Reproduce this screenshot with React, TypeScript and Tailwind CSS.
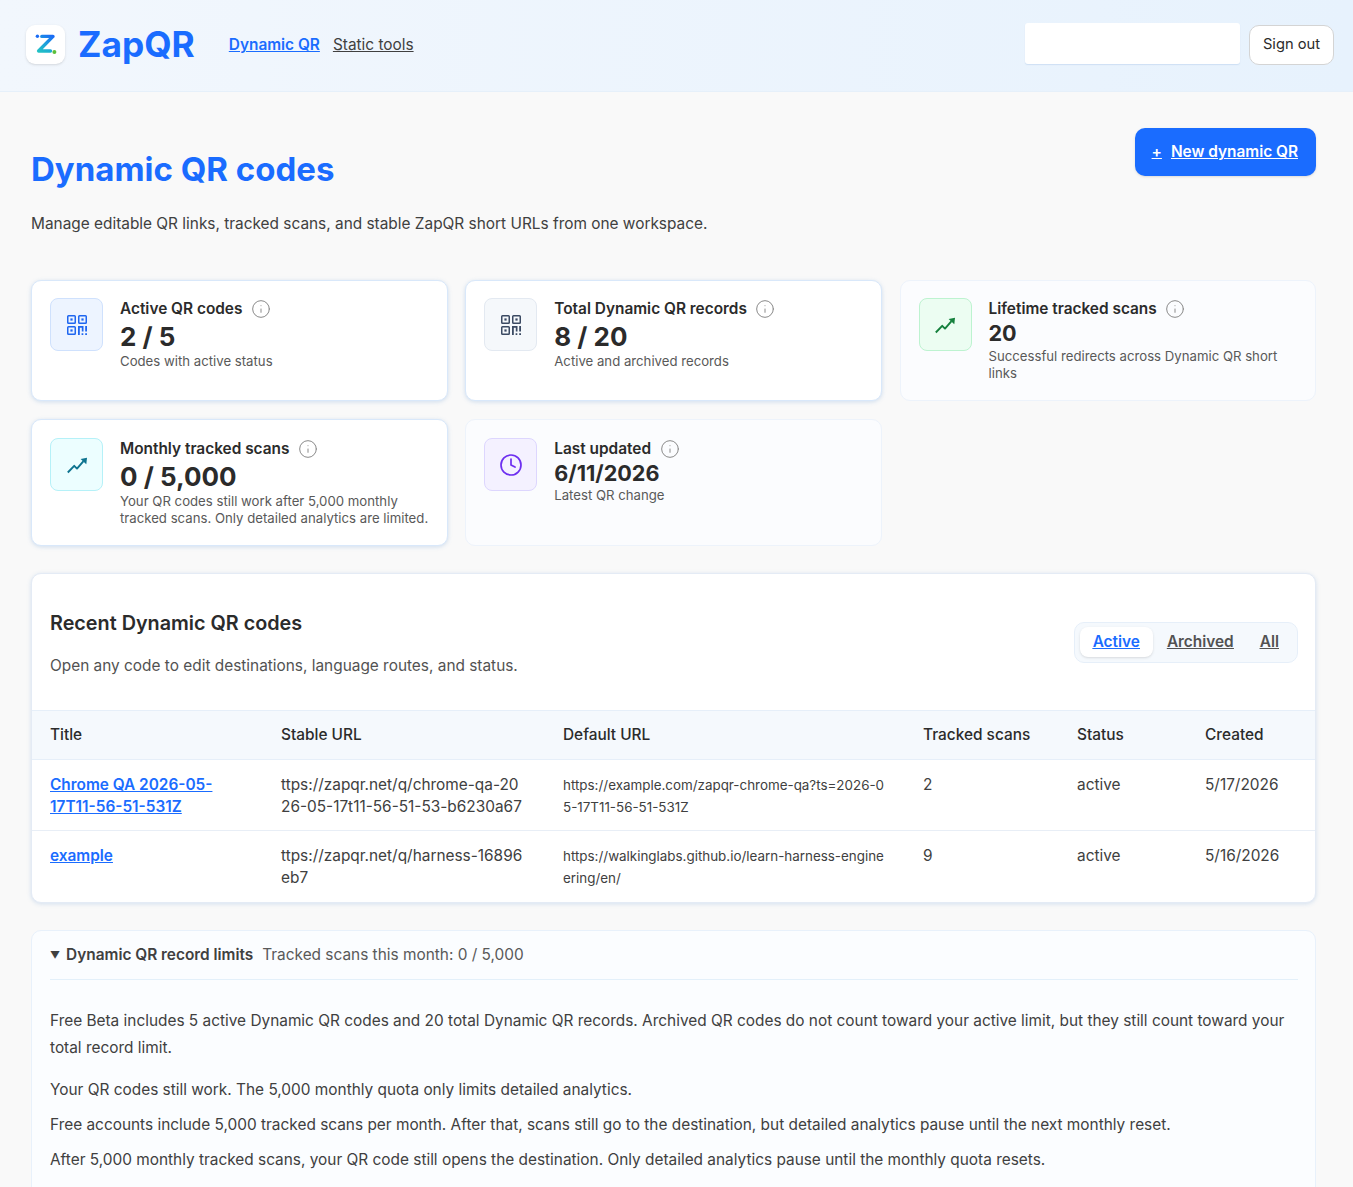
import React from 'react';
import { Info, Clock } from 'lucide-react';

const Logo = () => (
  <svg width="24" height="24" viewBox="0 0 24 24" fill="none">
    <defs>
      <linearGradient id="zg" gradientUnits="userSpaceOnUse" x1="6" y1="20" x2="16" y2="2">
        <stop offset="0" stopColor="#22c3c3" />
        <stop offset="0.55" stopColor="#1d9fdc" />
        <stop offset="1" stopColor="#1a6cf5" />
      </linearGradient>
    </defs>
    <circle cx="3.4" cy="3.2" r="1.7" fill="#1a6cf5" />
    <path d="M7.8 3.4H19L4.6 18H16.5" stroke="url(#zg)" strokeWidth="3.4" strokeLinecap="round" strokeLinejoin="round" />
    <circle cx="20.4" cy="19" r="2" fill="#5bbf3a" />
  </svg>
);

const QrIcon = ({ className }: { className?: string }) => (
  <svg className={className} viewBox="0 0 20 20" fill="none" stroke="currentColor" strokeWidth="1.5">
    <rect x="0.75" y="0.75" width="7.5" height="7.5" rx="0.8" />
    <rect x="11.75" y="0.75" width="7.5" height="7.5" rx="0.8" />
    <rect x="0.75" y="11.75" width="7.5" height="7.5" rx="0.8" />
    <g fill="currentColor" stroke="none">
      <rect x="3.4" y="3.4" width="2.2" height="2.2" />
      <rect x="14.4" y="3.4" width="2.2" height="2.2" />
      <rect x="3.4" y="14.4" width="2.2" height="2.2" />
      <path d="M11 11h5.5v5.5h-1.7v-3.8H12.8V20H11zM18.2 11H20v5.5h-1.8zM14.6 18.2h1.7V20h-1.7zM18.2 18.2H20V20h-1.8z" />
    </g>
  </svg>
);

const TrendIcon = ({ className }: { className?: string }) => (
  <svg className={className} viewBox="0 0 20 20" fill="none">
    <path d="M0.8 17.5L7.2 10.8L10 13.6L16.5 6.2" stroke="currentColor" strokeWidth="1.9" strokeLinejoin="round" />
    <path d="M13.6 3.9L20 2.8L19.3 9.3Z" fill="currentColor" />
  </svg>
);

const ClockIcon = ({ className }: { className?: string }) => <Clock className={className} strokeWidth={1.7} />;

const stats = [
  { name: 'Active QR codes', value: '2 / 5', sub: 'Codes with active status', Icon: QrIcon, size: 'w-[20px] h-[20px]', box: 'bg-[#edf4ff] border-[#cfe1fd]', iconColor: 'text-[#1f66f0]', big: true, strong: true },
  { name: 'Total Dynamic QR records', value: '8 / 20', sub: 'Active and archived records', Icon: QrIcon, size: 'w-[20px] h-[20px]', box: 'bg-[#f5f8fb] border-[#e3e9f1]', iconColor: 'text-[#3b4a63]', big: true, strong: true },
  { name: 'Lifetime tracked scans', value: '20', sub: 'Successful redirects across Dynamic QR short links', Icon: TrendIcon, size: 'w-[20px] h-[20px]', box: 'bg-[#ecfdf2] border-[#bdf3d0]', iconColor: 'text-[#15803d]', big: false, strong: false },
  { name: 'Monthly tracked scans', value: '0 / 5,000', sub: 'Your QR codes still work after 5,000 monthly tracked scans. Only detailed analytics are limited.', Icon: TrendIcon, size: 'w-[20px] h-[20px]', box: 'bg-[#ecfeff] border-[#b5f1f8]', iconColor: 'text-[#0e7490]', big: true, strong: true },
  { name: 'Last updated', value: '6/11/2026', sub: 'Latest QR change', Icon: ClockIcon, size: 'w-[24px] h-[24px]', box: 'bg-[#f4f1ff] border-[#ddd6fe]', iconColor: 'text-[#6d2ff0]', big: false, strong: false },
];

const rows = [
  { title: 'Chrome QA 2026-05-17T11-56-51-531Z', stable: 'ttps://zapqr.net/q/chrome-qa-2026-05-17t11-56-51-53-b6230a67', url: 'https://example.com/zapqr-chrome-qa?ts=2026-05-17T11-56-51-531Z', scans: '2', status: 'active', created: '5/17/2026' },
  { title: 'example', stable: 'ttps://zapqr.net/q/harness-16896eb7', url: 'https://walkinglabs.github.io/learn-harness-engineering/en/', scans: '9', status: 'active', created: '5/16/2026' },
];

const App: React.FC = () => {
  return (
    <div className="h-[1187px] overflow-hidden bg-[#f9f9f9] text-[#2b2b2b] font-['Inter',sans-serif]">
      {/* Header */}
      <header className="h-[92px] border-b border-[#e6f0fa] bg-gradient-to-r from-[#f2f7fd] to-[#e7f2fd] pl-[26px] pr-[19px] pb-[2px] flex items-center">
        <div className="w-[39px] h-[39px] rounded-[9px] bg-white flex items-center justify-center shadow-sm">
          <Logo />
        </div>
        <span className="ml-[13px] text-[35.3px] font-bold text-[#1a6cff] leading-none">ZapQR</span>
        <nav className="ml-[34px] flex items-center gap-[13px] text-[15.4px]">
          <a className="font-semibold text-[#1a6cff] underline">Dynamic QR</a>
          <a className="text-[#404040] underline">Static tools</a>
        </nav>
        <div className="ml-auto flex items-center gap-[9px]">
          <div className="w-[215px] h-[41px] mb-[3px] bg-white rounded-[3px] shadow-[0_1px_1px_rgba(180,205,235,0.5)]" />
          <button className="h-[40px] px-[13px] rounded-[10px] border border-[#d4d4d4] bg-white text-[14.7px] text-[#2b2b2b]">Sign out</button>
        </div>
      </header>

      <main className="ml-[31px] mr-[37px]">
        {/* Title */}
        <div className="flex items-start justify-between pt-[36px]">
          <div>
            <h1 className="mt-[20px] text-[33px] leading-[42px] font-bold text-[#1a6cff]">Dynamic QR codes</h1>
            <p className="mt-[22px] text-[15.4px] leading-[24px] text-[#404040]">Manage editable QR links, tracked scans, and stable ZapQR short URLs from one workspace.</p>
          </div>
          <a className="h-[48px] pl-[17px] pr-[18px] rounded-[10px] bg-[#1a6cff] text-white font-semibold text-[15.4px] flex items-center gap-[9px] underline shadow-sm">
            <span>+</span>
            <span>New dynamic QR</span>
          </a>
        </div>

        {/* Stats */}
        <div className="mt-[44px] grid grid-cols-[417px_417px_1fr] grid-rows-[121px_127px] gap-x-[17.25px] gap-y-[18px]">
          {stats.map((s, i) => (
            <div
              key={s.name}
              className={s.strong
                ? 'flex gap-[17px] p-[18px] rounded-[10px] bg-white border border-[#d9e8fa] shadow-[0_1px_4px_rgba(100,150,210,0.28)]'
                : 'flex gap-[17px] p-[18px] rounded-[10px] bg-[#fbfcfe] border border-[#edf3fb]'}
            >
              <div className={`${i < 3 ? '-mt-px' : ''} w-[53px] h-[53px] shrink-0 rounded-[8px] border flex items-center justify-center ${s.box}`}>
                <s.Icon className={`${s.size} ${s.iconColor}`} />
              </div>
              <div className={i < 3 ? 'min-w-0' : 'min-w-0 pt-px'}>
                <div className="flex items-center gap-[8.5px] text-[15.4px] leading-[20px] font-semibold">
                  {s.name}
                  <Info className="w-[20px] h-[20px] text-[#8a8a8a]" strokeWidth={1.2} />
                </div>
                <div className={s.big ? 'mt-[2px] text-[26px] leading-[32px] font-bold' : 'mt-[2px] text-[21.6px] leading-[24px] font-bold'}>{s.value}</div>
                <div className={s.big ? 'text-[13.2px] leading-[17px] text-[#595959]' : i < 3 ? 'mt-[3px] text-[13.2px] leading-[17px] text-[#595959]' : 'mt-[2px] text-[13.2px] leading-[17px] text-[#595959]'}>{s.sub}</div>
              </div>
            </div>
          ))}
        </div>

        {/* Recent codes */}
        <section className="mt-[27px] rounded-[10px] bg-white border border-[#e4ebf5] shadow-[0_1px_4px_rgba(100,150,210,0.25)] overflow-hidden">
          <div className="h-[136px] pl-[18px] pr-[17px] flex items-center justify-between">
            <div className="pt-[3px]">
              <h2 className="text-[19.8px] leading-[28px] font-semibold">Recent Dynamic QR codes</h2>
              <p className="mt-[17px] text-[15.4px] leading-[24px] text-[#525252]">Open any code to edit destinations, language routes, and status.</p>
            </div>
            <div className="h-[41px] flex items-center gap-[1px] pl-[5px] pr-[5px] rounded-[10px] bg-[#f5f9fd] border border-[#e6eff9] text-[15.4px] font-semibold underline text-[#525252]">
              <a className="h-[30px] px-[13px] flex items-center rounded-[8px] bg-white text-[#1a6cff] shadow-sm">Active</a>
              <a className="pl-[13px] pr-[12px]">Archived</a>
              <a className="px-[13px]">All</a>
            </div>
          </div>
          <table className="w-full table-fixed text-left text-[15.4px]">
            <colgroup>
              <col className="w-[230px]" />
              <col className="w-[282px]" />
              <col className="w-[360px]" />
              <col className="w-[154px]" />
              <col className="w-[128px]" />
              <col />
            </colgroup>
            <thead>
              <tr className="h-[49px] bg-[#f5f9fd] border-y border-[#e6eff9]">
                {['Title', 'Stable URL', 'Default URL', 'Tracked scans', 'Status', 'Created'].map((h, i) => (
                  <th key={h} className={i === 0 ? 'pl-[18px] pr-[19px] font-medium' : 'pl-[19px] pr-[19px] font-medium'}>{h}</th>
                ))}
              </tr>
            </thead>
            <tbody>
              {rows.map((r, i) => {
                const pad = i === 0 ? 'pt-[14px] pb-[12px]' : 'pt-[14px] pb-[13px]';
                return (
                  <tr key={r.title} className={i === 0 ? 'border-b border-[#e8eef6] align-top' : 'align-top'}>
                    <td className={`pl-[18px] pr-[30px] ${pad} leading-[22px]`}>
                      <a className="font-semibold text-[#1a6cff] underline">{r.title}</a>
                    </td>
                    <td className={`px-[19px] ${pad} leading-[22px] break-all text-[#404040]`}>{r.stable}</td>
                    <td className={`px-[19px] ${pad} leading-[22px] break-all text-[13.4px] text-[#404040]`}>{r.url}</td>
                    <td className={`px-[19px] ${pad} leading-[22px] text-[#404040]`}>{r.scans}</td>
                    <td className={`px-[19px] ${pad} leading-[22px] text-[#404040]`}>{r.status}</td>
                    <td className={`px-[19px] ${pad} leading-[22px] text-[#404040]`}>{r.created}</td>
                  </tr>
                );
              })}
            </tbody>
          </table>
        </section>

        {/* Limits */}
        <details open className="mt-[27px] rounded-[10px] bg-[#fbfdff] border border-[#e8f1fb] pl-[18px] pr-[17px] pb-[40px]">
          <summary className="h-[49px] flex items-center border-b border-[#e3f0fa] text-[15.4px]">
            <span className="mr-[6px] text-[10px] text-[#404040]">▼</span>
            <span className="font-semibold text-[#404040]">Dynamic QR record limits</span>
            <span className="ml-[9px] text-[#595959]">Tracked scans this month: 0 / 5,000</span>
          </summary>
          <div className="pt-[27px] text-[15.4px] leading-[27px] text-[#404040]">
            <p>Free Beta includes 5 active Dynamic QR codes and 20 total Dynamic QR records. Archived QR codes do not count toward your active limit, but they still count toward your total record limit.</p>
            <p className="mt-[15px]">Your QR codes still work. The 5,000 monthly quota only limits detailed analytics.</p>
            <p className="mt-[8px]">Free accounts include 5,000 tracked scans per month. After that, scans still go to the destination, but detailed analytics pause until the next monthly reset.</p>
            <p className="mt-[8px]">After 5,000 monthly tracked scans, your QR code still opens the destination. Only detailed analytics pause until the monthly quota resets.</p>
          </div>
        </details>
      </main>
    </div>
  );
};

export default App;
